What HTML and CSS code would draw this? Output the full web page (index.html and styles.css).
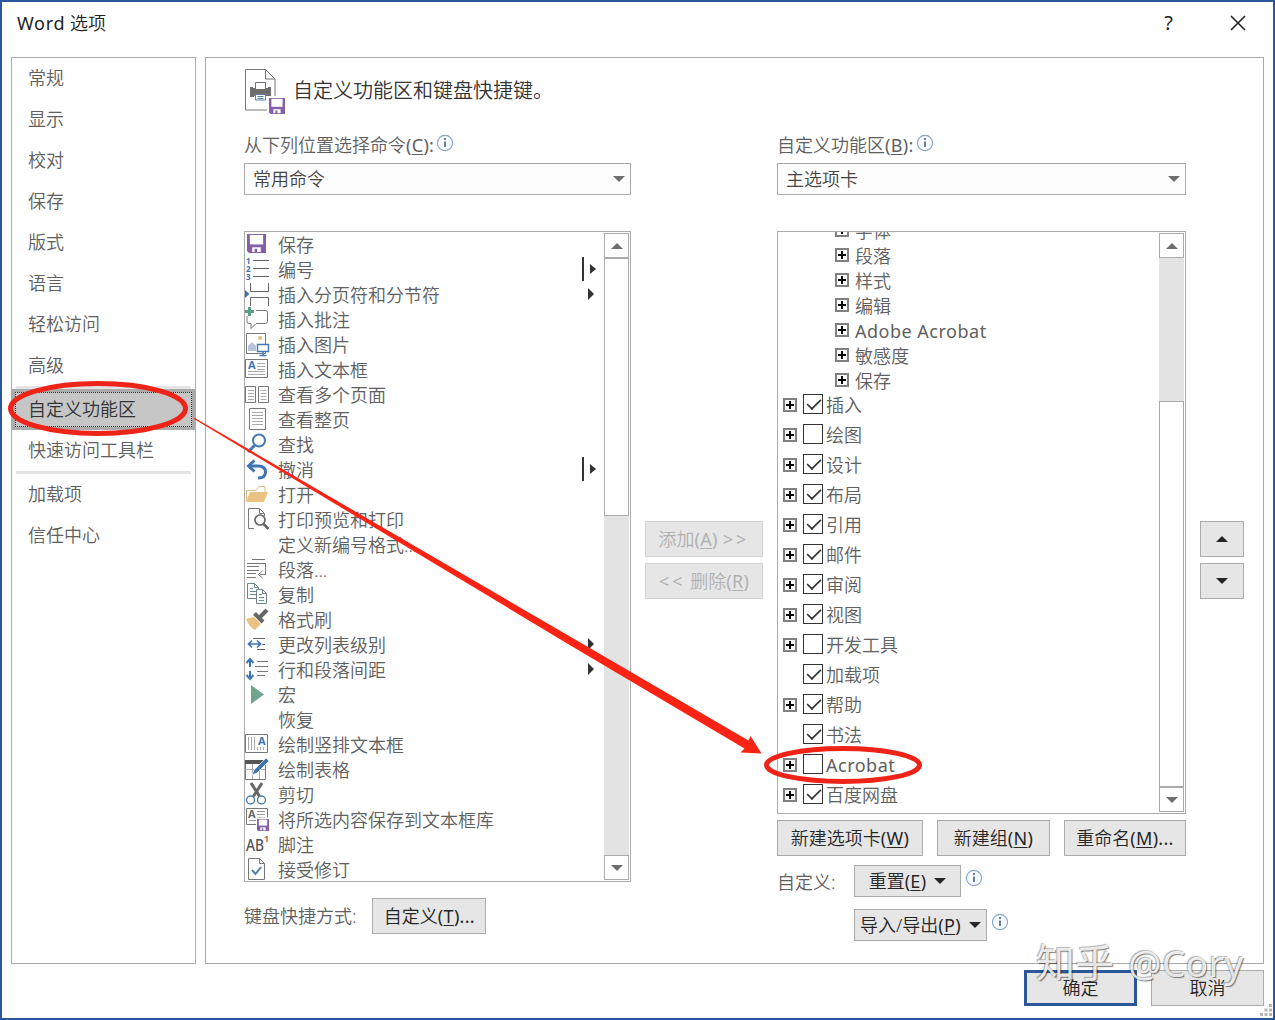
FILE: index.html
```
<!DOCTYPE html>
<html lang="zh-CN">
<head>
    <meta charset="UTF-8">
    <meta name="viewport" content="width=device-width, initial-scale=1.0">
    <title>Word 选项</title>
    <link rel="stylesheet" href="styles.css">
</head>
<body>
    <!-- 公用图标 -->
    <svg class="defs" width="0" height="0">
        <symbol id="plus" viewBox="0 0 14 14">
            <rect x="1" y="1" width="12" height="12" fill="#fff" stroke="#808080" stroke-width="2"/>
            <path d="M3 7h8M7 3v8" stroke="#000" stroke-width="2"/>
        </symbol>
        <symbol id="info" viewBox="0 0 18 18">
            <circle cx="9" cy="9" r="7.6" fill="#f8fbff" stroke="#86a3cb" stroke-width="1.1"/>
            <path d="M9 7.500v5.500" fill="none" stroke="#4c678f" stroke-width="1.700"/>
            <circle cx="9" cy="5" r="1.100" fill="#4c678f"/>
        </symbol>
        <symbol id="floppy" viewBox="0 0 20 20">
            <path d="M0 0h20v20H2l-2-2z" fill="#8460a8"/>
            <path d="M3 1h14v10H3z" fill="#fff"/>
            <path d="M5.5 14h9v5h-9z" fill="#fff"/>
            <path d="M8 15.5h2.5V20H8z" fill="#8460a8"/>
        </symbol>
        <symbol id="down" viewBox="0 0 12 6"><path d="M0 0h12L6 6z" fill="currentColor"/></symbol>
        <symbol id="up" viewBox="0 0 12 6"><path d="M0 6h12L6 0z" fill="currentColor"/></symbol>
    </svg>

    <div class="window">
        <div class="titlebar">
            <span class="title"><span class="word">Word</span> 选项</span>
            <span class="help">?</span>
            <svg class="close" width="16" height="16" viewBox="0 0 16 16"><path d="M1 1l14 14M15 1L1 15" stroke="#222" stroke-width="1.6"/></svg>
        </div>

        <div class="content">
            <!-- 左侧导航 -->
            <div class="nav">
                <div class="nav-item">常规</div>
                <div class="nav-item">显示</div>
                <div class="nav-item">校对</div>
                <div class="nav-item">保存</div>
                <div class="nav-item">版式</div>
                <div class="nav-item">语言</div>
                <div class="nav-item">轻松访问</div>
                <div class="nav-item">高级</div>
                <div class="nav-line"></div>
                <div class="nav-item active"><span>自定义功能区</span></div>
                <div class="nav-item">快速访问工具栏</div>
                <div class="nav-line"></div>
                <div class="nav-item">加载项</div>
                <div class="nav-item">信任中心</div>
            </div>

            <div class="main">
                <div class="heading">
                    <svg width="42" height="48" viewBox="0 0 42 48">
                        <path d="M1.5 1.5h20l9.500 9.500v31H1.500z" fill="#fff" stroke="#777"/>
                        <path d="M21.500 1.500v9.500h9.500" fill="none" stroke="#777"/>
                        <path d="M6 19h3v3h15v-3h3v10h-4v-2H10v2H6z" fill="#6e6e6e"/>
                        <path d="M6 20h21v8H6z" fill="#6e6e6e"/>
                        <path d="M11.500 14.500h10v7h-10z" fill="#fff" stroke="#6e6e6e"/>
                        <path d="M11.500 26.500h10v5.500h-10z" fill="#fff" stroke="#5580a8"/>
                        <path d="M13.500 28.500h6M13.500 30.500h6" stroke="#5580a8"/>
                        <path d="M23 28h19v20H23z" fill="#fff"/>
                        <use href="#floppy" x="25" y="30" width="16" height="16"/>
                    </svg>
                    <span>自定义功能区和键盘快捷键。</span>
                </div>

                <div class="columns">
                    <!-- 命令列表 -->
                    <div class="col">
                        <div class="label">从下列位置选择命令<span class="key">(<u>C</u>):</span><svg width="18" height="18"><use href="#info"/></svg></div>
                        <div class="combo">常用命令<svg width="12" height="6"><use href="#down"/></svg></div>
                        <div class="list commands">
                            <div class="rows">
                                <div class="row"><svg class="ico" viewBox="0 0 25 25"><use href="#floppy" x="2" y="2" width="19" height="19"/></svg>保存</div>
                                <div class="row"><svg class="ico" viewBox="0 0 25 25"><path d="M8 3.500h16M8 11.500h16M8 19.500h16" stroke="#666"/><g class="digit"><text x="1" y="7">1</text><text x="1" y="15">2</text><text x="1" y="23">3</text></g></svg>编号<svg class="more split" viewBox="0 0 15 24"><path d="M1 0v24" stroke="#333" stroke-width="2"/><path d="M8 7l6 5-6 5z" fill="#333"/></svg></div>
                                <div class="row"><svg class="ico" viewBox="0 0 25 25"><path d="M5.500 1v8.500h18V1M5.500 24v-8.500h18V24" fill="none" stroke="#666"/><path d="M0 8l4.500 4L0 16z" fill="#3c74b4"/></svg>插入分页符和分节符<svg class="more" viewBox="0 0 6 12"><path d="M0 0l6 6-6 6z" fill="#333"/></svg></div>
                                <div class="row"><svg class="ico" viewBox="0 0 25 25"><path d="M11 3.500h9.500q2 0 2 2v9q0 2-2 2H11l-5 5v-5H4q-2 0-2-2V9" fill="none" stroke="#777"/><path d="M4.500 0v9M0 4.500h9" stroke="#5d9f86" stroke-width="3"/></svg>插入批注</div>
                                <div class="row"><svg class="ico" viewBox="0 0 25 25"><path d="M1.500 1.500h19v20h-19z" fill="#fff" stroke="#777"/><circle cx="15" cy="6" r="2" fill="#e8bd83"/><path d="M3 19v-5l4-4 4 4v5z" fill="#b7c5d8"/><path d="M12.500 12.500h11v7h-11z" fill="#fff" stroke="#4379b5" stroke-width="1.400"/><path d="M18 20v3.500M14.500 23.500h7" stroke="#4379b5" stroke-width="1.400"/></svg>插入图片</div>
                                <div class="row"><svg class="ico" viewBox="0 0 25 25"><path d="M.5 2.500h22v18H.5z" fill="#fff" stroke="#777"/><path d="M12 6.500h8M12 9.500h8M12 12.500h8M3 14.500h17M3 17.500h17" stroke="#aaa"/><text class="a" x="3" y="12">A</text></svg>插入文本框</div>
                                <div class="row"><svg class="ico" viewBox="0 0 25 25"><path d="M.5 4.500h10v16H.5zM13.500 4.500h10v16h-10z" fill="#fff" stroke="#777"/><path d="M3 8.500h6M3 11.500h6M3 14.500h6M3 17.500h6M15.500 8.500h6M15.500 11.500h6M15.500 14.500h6M15.500 17.500h6" stroke="#aaa"/></svg>查看多个页面</div>
                                <div class="row"><svg class="ico" viewBox="0 0 25 25"><path d="M4.500 1.500h16v21h-16z" fill="#fff" stroke="#777"/><path d="M7 5.500h11M7 8.500h11M7 11.500h11M7 14.500h11M7 17.500h11" stroke="#aaa"/></svg>查看整页</div>
                                <div class="row"><svg class="ico" viewBox="0 0 25 25"><circle cx="14" cy="8.500" r="6" fill="none" stroke="#4379b5" stroke-width="2"/><path d="M9.500 13.500L3 20" stroke="#4379b5" stroke-width="3"/></svg>查找</div>
                                <div class="row"><svg class="ico" viewBox="0 0 25 25"><path d="M4 9h9c5 0 7.500 2.500 7.500 6 0 4-3 6-7.500 6" fill="none" stroke="#3c74b4" stroke-width="3"/><path d="M9.500 3.500L3.500 9l6 5.500" fill="none" stroke="#3c74b4" stroke-width="3"/></svg>撤消<svg class="more split" viewBox="0 0 15 24"><path d="M1 0v24" stroke="#333" stroke-width="2"/><path d="M8 7l6 5-6 5z" fill="#333"/></svg></div>
                                <div class="row"><svg class="ico" viewBox="0 0 25 25"><path d="M1.500 19V8.500H11l3-4h6v6" fill="#fff" stroke="#e2bd83"/><path d="M1 20l4-10h18l-4 10z" fill="#eac282"/></svg>打开</div>
                                <div class="row"><svg class="ico" viewBox="0 0 25 25"><path d="M9 21.500H3.500v-20h11l5 5V9M14.500 1.500v5h5" fill="none" stroke="#777"/><circle cx="15" cy="13" r="5" fill="#fff" stroke="#666" stroke-width="1.700"/><path d="M18.500 17l5 5" stroke="#666" stroke-width="2.500"/></svg>打印预览和打印</div>
                                <div class="row"><svg class="ico"></svg>定义新编号格式...</div>
                                <div class="row"><svg class="ico" viewBox="0 0 25 25"><path d="M7 2.500h13M2 6.500h19M2 9.500h12M2 13.500h12M2 16.500h9M2 20.500h9" stroke="#777"/><path d="M20.500 6.500v11H15M17.500 14l-4 3.500 4 3.500" fill="none" stroke="#777"/></svg>段落...</div>
                                <div class="row"><svg class="ico" viewBox="0 0 25 25"><path d="M2.500 1.500h7l4 4v11h-11z M9.500 1.500v4h4" fill="#fff" stroke="#71828b"/><path d="M5 6.500h3M5 9.500h6M5 12.500h6" stroke="#5d9197"/><path d="M11.500 7.500h6l4 4v10h-10z M17.500 7.500v4h4" fill="#fff" stroke="#71828b"/><path d="M14 12.500h3M14 15.500h5M14 18.500h5" stroke="#5d9197"/></svg>复制</div>
                                <div class="row"><svg class="ico" viewBox="0 0 25 25"><path d="M1 12l8-2 7 7-6 6c-4-2-7-6-9-11z" fill="#eac282"/><path d="M9.500 6.500l8.500 8.500" stroke="#666" stroke-width="4"/><path d="M15 10l7-7" stroke="#666" stroke-width="4"/></svg>格式刷</div>
                                <div class="row"><svg class="ico" viewBox="0 0 25 25"><path d="M4 12h11M7 8.500L3.500 12 7 15.500M12 8.500l3.500 3.500-3.500 3.500" fill="none" stroke="#3c74b4" stroke-width="1.700"/><path d="M8 6.500h12M17 12.500h3M12 17.500h8" stroke="#666"/></svg>更改列表级别<svg class="more" viewBox="0 0 6 12"><path d="M0 0l6 6-6 6z" fill="#333"/></svg></div>
                                <div class="row"><svg class="ico" viewBox="0 0 25 25"><path d="M5 2v8M1.500 6L5 2l3.500 4M5 14v8M1.500 18L5 22l3.500-4" fill="none" stroke="#3c74b4" stroke-width="2"/><path d="M12 4.500h11M10 9.500h13M12 14.500h11M12 18.500h8" stroke="#777"/></svg>行和段落间距<svg class="more" viewBox="0 0 6 12"><path d="M0 0l6 6-6 6z" fill="#333"/></svg></div>
                                <div class="row"><svg class="ico" viewBox="0 0 25 25"><path d="M6 3l13 9.500L6 22z" fill="#70a690"/></svg>宏</div>
                                <div class="row"><svg class="ico"></svg>恢复</div>
                                <div class="row"><svg class="ico" viewBox="0 0 25 25"><path d="M.5 2.500h22v18H.5z" fill="#fff" stroke="#777"/><path d="M3.500 5v13M6.500 5v13M9.500 5v13M12.500 15v3M15.500 15v3M18.500 15v3" stroke="#aaa"/><text class="a" x="13" y="13">A</text></svg>绘制竖排文本框</div>
                                <div class="row"><svg class="ico" viewBox="0 0 25 25"><path d="M.5 4.500h20v18H.5z" fill="#fff" stroke="#777"/><path d="M.5 12.500h20M7.500 7v15M14.500 7v15" stroke="#aaa"/><path d="M0 3h21v4H0z" fill="#555"/><path d="M7 18l2-5L21 1l3 3-12 12z" fill="#3c74b4" stroke="#fff" stroke-width=".7"/></svg>绘制表格</div>
                                <div class="row"><svg class="ico" viewBox="0 0 25 25"><path d="M6 1l9 14M17 1L8 15" stroke="#666" stroke-width="3"/><circle cx="5.500" cy="18" r="4" fill="#fff" stroke="#5580b0" stroke-width="1.500"/><circle cx="16.500" cy="18" r="4" fill="#fff" stroke="#5580b0" stroke-width="1.500"/></svg>剪切</div>
                                <div class="row"><svg class="ico" viewBox="0 0 25 25"><path d="M1.500 1.500h21v16h-21z" fill="#fff" stroke="#777"/><path d="M12 4.500h8M12 7.500h8M12 10.500h8M4 13.500h8" stroke="#999"/><text class="a gray" x="3" y="11">A</text><path d="M11 10.500h13v14H11z" fill="#fff"/><use href="#floppy" x="12" y="12" width="12" height="12"/></svg>将所选内容保存到文本框库</div>
                                <div class="row"><svg class="ico" viewBox="0 0 25 25"><text class="ab" x="1" y="19" textLength="18" lengthAdjust="spacingAndGlyphs">AB</text><text class="one" x="19" y="10">1</text></svg>脚注</div>
                                <div class="row"><svg class="ico" viewBox="0 0 25 25"><path d="M3.500 1.500h11l5 5v16h-16z M14.500 1.500v5h5" fill="#fff" stroke="#777"/><path d="M7 13l3.500 4 5.500-7" fill="none" stroke="#4f7eae" stroke-width="2"/></svg>接受修订</div>
                            </div>
                            <div class="scroll">
                                <div class="sbtn"><svg width="12" height="6"><use href="#up"/></svg></div>
                                <div class="thumb thumb-left"></div>
                                <div class="track"></div>
                                <div class="sbtn"><svg width="12" height="6"><use href="#down"/></svg></div>
                            </div>
                        </div>
                        <div class="keys">
                            <span>键盘快捷方式:</span>
                            <div class="btn btn-custom">自定义<span class="key">(<u>T</u>)...</span></div>
                        </div>
                    </div>

                    <div class="col mid">
                        <div class="btn disabled">添加<span class="key">(<u>A</u>) <span class="arrows">&gt;&gt;</span></span></div>
                        <div class="btn disabled"><span class="key arrows">&lt;&lt;</span> 删除<span class="key">(<u>R</u>)</span></div>
                    </div>

                    <!-- 选项卡树 -->
                    <div class="col">
                        <div class="label">自定义功能区<span class="key">(<u>B</u>):</span><svg width="18" height="18"><use href="#info"/></svg></div>
                        <div class="combo">主选项卡<svg width="12" height="6"><use href="#down"/></svg></div>
                        <div class="list tree">
                            <div class="rows">
                                <div class="groups">
                                    <div class="group"><svg class="plus"><use href="#plus"/></svg>字体</div>
                                    <div class="group"><svg class="plus"><use href="#plus"/></svg>段落</div>
                                    <div class="group"><svg class="plus"><use href="#plus"/></svg>样式</div>
                                    <div class="group"><svg class="plus"><use href="#plus"/></svg>编辑</div>
                                    <div class="group"><svg class="plus"><use href="#plus"/></svg><span class="latin">Adobe Acrobat</span></div>
                                    <div class="group"><svg class="plus"><use href="#plus"/></svg>敏感度</div>
                                    <div class="group"><svg class="plus"><use href="#plus"/></svg>保存</div>
                                </div>
                                <div class="item"><svg class="plus"><use href="#plus"/></svg><i class="check on"></i>插入</div>
                                <div class="item"><svg class="plus"><use href="#plus"/></svg><i class="check"></i>绘图</div>
                                <div class="item"><svg class="plus"><use href="#plus"/></svg><i class="check on"></i>设计</div>
                                <div class="item"><svg class="plus"><use href="#plus"/></svg><i class="check on"></i>布局</div>
                                <div class="item"><svg class="plus"><use href="#plus"/></svg><i class="check on"></i>引用</div>
                                <div class="item"><svg class="plus"><use href="#plus"/></svg><i class="check on"></i>邮件</div>
                                <div class="item"><svg class="plus"><use href="#plus"/></svg><i class="check on"></i>审阅</div>
                                <div class="item"><svg class="plus"><use href="#plus"/></svg><i class="check on"></i>视图</div>
                                <div class="item"><svg class="plus"><use href="#plus"/></svg><i class="check"></i>开发工具</div>
                                <div class="item"><svg class="plus"></svg><i class="check on"></i>加载项</div>
                                <div class="item"><svg class="plus"><use href="#plus"/></svg><i class="check on"></i>帮助</div>
                                <div class="item"><svg class="plus"></svg><i class="check on"></i>书法</div>
                                <div class="item"><svg class="plus"><use href="#plus"/></svg><i class="check"></i><span class="latin">Acrobat</span></div>
                                <div class="item"><svg class="plus"><use href="#plus"/></svg><i class="check on"></i>百度网盘</div>
                            </div>
                            <div class="scroll">
                                <div class="sbtn"><svg width="12" height="6"><use href="#up"/></svg></div>
                                <div class="track"></div>
                                <div class="thumb thumb-right"></div>
                                <div class="sbtn"><svg width="12" height="6"><use href="#down"/></svg></div>
                            </div>
                        </div>
                        <div class="tab-buttons">
                            <div class="btn btn-tab">新建选项卡<span class="key">(<u>W</u>)</span></div>
                            <div class="btn btn-group">新建组<span class="key">(<u>N</u>)</span></div>
                            <div class="btn btn-rename">重命名<span class="key">(<u>M</u>)...</span></div>
                        </div>
                        <div class="reset">
                            <span class="reset-label">自定义:</span>
                            <div class="btn btn-reset">重置<span class="key">(<u>E</u>)</span><svg width="12" height="6"><use href="#down"/></svg></div>
                            <svg class="tip" width="18" height="18"><use href="#info"/></svg>
                        </div>
                        <div class="reset">
                            <span class="reset-label"></span>
                            <div class="btn btn-import">导入/导出<span class="key">(<u>P</u>)</span><svg width="12" height="6"><use href="#down"/></svg></div>
                            <svg class="tip" width="18" height="18"><use href="#info"/></svg>
                        </div>
                    </div>

                    <div class="col mid">
                        <div class="btn"><svg width="12" height="6"><use href="#up"/></svg></div>
                        <div class="btn"><svg width="12" height="6"><use href="#down"/></svg></div>
                    </div>
                </div>
            </div>
        </div>

        <div class="footer">
            <div class="btn ok">确定</div>
            <div class="btn">取消</div>
        </div>

        <svg class="grip" width="12" height="12" viewBox="0 0 12 12"><path d="M9 0h3v3H9zM4.500 4.500h3v3h-3zM9 4.500h3v3H9zM0 9h3v3H0zM4.500 9h3v3h-3zM9 9h3v3H9z" fill="#b5b5b5"/></svg>
    </div>

    <!-- 红色标注 -->
    <svg class="marks" width="1275" height="1020" viewBox="0 0 1275 1020">
        <ellipse cx="98" cy="408.500" rx="87.500" ry="25" fill="none" stroke="#ee2418" stroke-width="5"/>
        <ellipse cx="843" cy="765" rx="76.500" ry="16.500" fill="none" stroke="#ee2418" stroke-width="5"/>
        <path d="M194 417.500L570 636.500 748.500 740.500 750.500 736 761.500 753.500 740.500 752.500 744.500 748.500 568 644 194 419z" fill="#fa2314"/>
    </svg>
    <div class="watermark">知乎 <span>@Cory</span></div>
</body>
</html>
```
FILE: styles.css
```
* {
    box-sizing: border-box;
}
body {
    margin: 0;
    font-family: "Noto Sans", "Noto Sans CJK SC", sans-serif;
    font-size: 18px;
    font-weight: 350;
    line-height: 24px;
    color: #606060;
    background: #fff;
    overflow: hidden;
}
svg {
    display: block;
    flex-shrink: 0;
}
.defs {
    position: absolute;
}
u {
    text-underline-offset: 2px;
    text-decoration-thickness: 1px;
}
.window {
    position: relative;
    width: 1275px;
    height: 1020px;
    padding: 0 9px;
    border: 2px solid #2b579a;
}
.titlebar {
    display: flex;
    align-items: center;
    height: 55px;
    padding: 0 18px 13px 6px;
    color: #222;
}
.title {
    flex: 1;
}
.word {
    font-weight: 400;
    letter-spacing: .7px;
}
.help {
    margin-right: 57px;
    font-size: 20px;
    font-weight: 400;
}
.content {
    display: flex;
    gap: 9px;
    height: 907px;
}

/* 导航 */
.nav {
    width: 185px;
    border: 1px solid #ababab;
}
.nav-item {
    height: 41px;
    padding-left: 16px;
    line-height: 41px;
}
.nav-line {
    height: 3px;
    margin: 0 4px;
    background: #e4e4e4;
}
.nav-item.active {
    margin: 0 -1px;
    padding: 3px 4px;
    background: #ababab;
    color: #333;
}
.nav-item.active span {
    display: block;
    height: 35px;
    padding-left: 12px;
    border: 1px dotted #333;
    background: #c6c6c6;
    line-height: 33px;
}

/* 主区域 */
.main {
    width: 1059px;
    padding: 10px 0 0 38px;
    border: 1px solid #ababab;
}
.heading {
    display: flex;
    gap: 7px;
    height: 64px;
    font-size: 20px;
    line-height: 46px;
    color: #333;
}
.columns {
    display: grid;
    grid-template-columns: 387px 118px 409px 44px;
    column-gap: 14px;
}
.label {
    display: flex;
    height: 31px;
    line-height: 27px;
}
.label svg {
    margin: 2px 0 0 2px;
}
.combo {
    display: flex;
    justify-content: space-between;
    align-items: center;
    height: 32px;
    padding: 0 5px 0 8px;
    border: 1px solid #ababab;
    background: #fdfdfd;
    color: #444;
}
.combo svg,
.sbtn svg {
    color: #6e6e6e;
}
.list {
    display: flex;
    margin-top: 36px;
    padding-right: 1px;
    border: 1px solid #ababab;
    overflow: hidden;
}
.commands {
    height: 651px;
}
.tree {
    height: 583px;
}
.rows {
    flex: 1;
}
.row {
    display: flex;
    height: 25px;
    padding-right: 10px;
    line-height: 26px;
}
.ico {
    width: 25px;
    height: 25px;
    margin-right: 8px;
}
.digit {
    font: bold 8px "Noto Sans", sans-serif;
    fill: #3c74b4;
}
.a {
    font: bold 11px "Noto Sans", sans-serif;
    fill: #3c74b4;
}
.a.gray {
    fill: #666;
}
.ab {
    font: 500 16px "Noto Sans", sans-serif;
    fill: #555;
}
.one {
    font: bold 9px "Noto Sans", sans-serif;
    fill: #c8643c;
}
.more {
    width: 6px;
    height: 12px;
    margin: 6px 0 0 auto;
}
.more.split {
    width: 15px;
    height: 24px;
    margin: 0 -3px 0 auto;
}

/* 滚动条 */
.scroll {
    display: flex;
    flex-direction: column;
    width: 25px;
    margin: 1px 0;
    background: #e3e3e3;
}
.sbtn {
    display: flex;
    align-items: center;
    justify-content: center;
    height: 25px;
    flex-shrink: 0;
    border: 1px solid #ababab;
    background: #fff;
}
.track {
    flex: 1;
}
.thumb {
    border: 1px solid #ababab;
    background: #fff;
}
.thumb-left {
    height: 258px;
}
.thumb-right {
    height: 386px;
}

/* 选项卡树 */
.groups {
    margin: -14px 0 -3px;
}
.group {
    display: flex;
    align-items: center;
    gap: 6px;
    height: 25px;
    padding-left: 57px;
}
.plus {
    width: 14px;
    height: 14px;
}
.group .plus {
    margin-bottom: 2px;
}
.item {
    display: flex;
    align-items: center;
    height: 30px;
    padding-left: 5px;
}
.check {
    width: 20px;
    height: 20px;
    margin: 0 3px 2px 6px;
    border: 1px solid #333;
    background: #fff;
}
.check.on::after {
    content: "";
    display: block;
    width: 14px;
    height: 7px;
    margin: 3px 0 0 2px;
    border: solid #333;
    border-width: 0 0 2px 2px;
    transform: rotate(-45deg) scale(.85);
}
.key {
    font-weight: 400;
    letter-spacing: .3px;
}
.arrows {
    letter-spacing: 3px;
}
.latin {
    font-weight: 400;
    letter-spacing: .5px;
}

/* 按钮 */
.btn {
    display: flex;
    align-items: center;
    justify-content: center;
    height: 36px;
    border: 1px solid #ababab;
    background: #e6e6e6;
    color: #262626;
    white-space: pre;
}
.btn.disabled {
    border-color: #d0d0d0;
    color: #b1b1b1;
}
.mid {
    display: flex;
    flex-direction: column;
    gap: 6px;
    padding-top: 389px;
}
.keys {
    display: flex;
    align-items: center;
    gap: 16px;
    margin-top: 16px;
}
.btn-custom {
    width: 114px;
}
.tab-buttons {
    display: flex;
    justify-content: space-between;
    margin-top: 6px;
}
.btn-tab {
    width: 146px;
}
.btn-group {
    width: 113px;
}
.btn-rename {
    width: 122px;
}
.reset {
    display: flex;
    height: 32px;
    margin-top: 9px;
}
.reset + .reset {
    margin-top: 12px;
}
.reset-label {
    width: 77px;
    line-height: 34px;
}
.reset .btn {
    height: 32px;
}
.reset .btn svg {
    margin-left: 8px;
}
.btn-reset {
    width: 107px;
}
.btn-import {
    width: 133px;
}
.tip {
    margin: 4px 0 0 4px;
}
.footer {
    display: flex;
    justify-content: flex-end;
    gap: 14px;
    padding-top: 6px;
}
.footer .btn {
    width: 113px;
}
.footer .ok {
    border: 3px solid #2b579a;
}
.grip {
    position: absolute;
    right: 1px;
    bottom: 2px;
}

/* 标注与水印浮在窗口之上 */
.marks {
    position: absolute;
    left: 0;
    top: 0;
}
.watermark {
    position: absolute;
    left: 1036px;
    top: 938px;
    font-size: 39px;
    font-weight: 400;
    line-height: 48px;
    color: rgba(255, 255, 255, .85);
    white-space: pre;
    text-shadow: 1px 1px 1px rgba(0, 0, 0, .5), -1px -1px 1px rgba(0, 0, 0, .3);
}
.watermark span {
    margin-left: 4px;
    font-size: 37px;
    letter-spacing: .5px;
}
```
